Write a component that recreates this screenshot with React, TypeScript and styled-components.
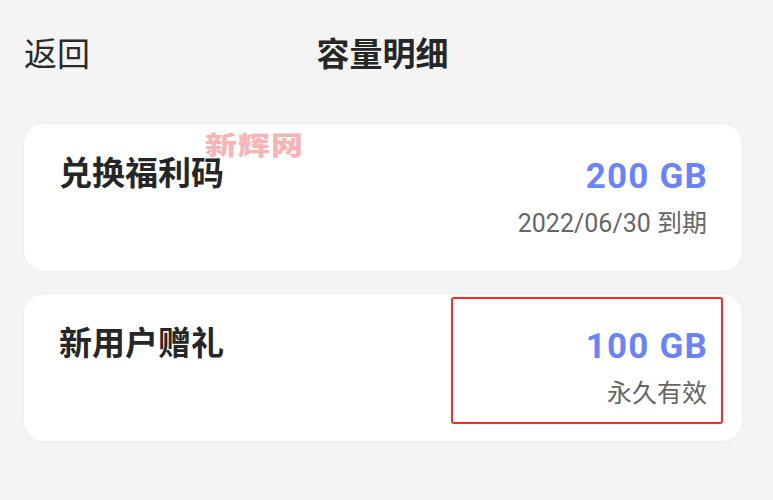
import React from "react";
import styled, { createGlobalStyle } from "styled-components";

const Global = createGlobalStyle`
  html, body { margin: 0; padding: 0; background: #f4f4f4; }
  body { font-family: Roboto, "Noto Sans CJK SC", sans-serif; color: #262626; }
`;

const Page = styled.div`
  width: 773px;
  height: 500px;
  background: #f4f4f4;
  display: flex;
  flex-direction: column;
  overflow: hidden;
`;

const Header = styled.div`
  position: relative;
  height: 104px;
  display: flex;
  align-items: center;
  padding-left: 24px;
  box-sizing: border-box;
`;

const Back = styled.div`
  font-size: 33px;
  line-height: 1;
  color: #2a2a2a;
  font-family: "Noto Sans CJK SC", sans-serif;
`;

const Title = styled.div`
  flex: 1;
  text-align: center;
  margin-right: 90px;
  margin-left: -8px;
  font-size: 33px;
  line-height: 1;
  font-weight: 700;
  color: #262626;
  font-family: "Noto Sans CJK SC", sans-serif;
`;

const List = styled.div`
  display: flex;
  flex-direction: column;
  gap: 23px;
  padding: 20px 31px 0 24px;
`;

const Card = styled.div`
  position: relative;
  height: 147px;
  box-sizing: border-box;
  background: #fff;
  border-radius: 20px;
  box-shadow: 0 0 0 1px #eeeeee;
  display: flex;
  justify-content: space-between;
  align-items: flex-start;
  padding: 27px 35px 0 35px;
`;

const Name = styled.div`
  font-family: "Noto Sans CJK SC", sans-serif;
  font-size: 33px;
  line-height: 40px;
  font-weight: 700;
  color: #262626;
`;

const Right = styled.div`
  display: flex;
  flex-direction: column;
  align-items: flex-end;
  gap: 15px;
  padding-top: 8px;
`;

const Amount = styled.div`
  font-family: Roboto, sans-serif;
  font-size: 35px;
  line-height: 35px;
  font-weight: 700;
  letter-spacing: 1.2px;
  margin-right: -1px;
  color: #6a84f6;
`;

const Sub = styled.div`
  font-family: Roboto, "Noto Sans CJK SC", sans-serif;
  font-size: 25px;
  line-height: 30px;
  color: #666666;
`;

const Watermark = styled.div`
  position: absolute;
  left: 181px;
  top: 7px;
  font-family: "Noto Sans CJK SC", sans-serif;
  font-weight: 900;
  font-size: 32px;
  letter-spacing: 1px;
  line-height: 32px;
  color: #f8b4b4;
  transform: scale(1, 0.8);
  transform-origin: top left;
  pointer-events: none;
`;

const Highlight = styled.div`
  position: absolute;
  left: 427px;
  top: 3px;
  width: 272px;
  height: 127px;
  box-sizing: border-box;
  border: 2.5px solid #ff2a22;
  border-radius: 3px;
  pointer-events: none;
`;

const items = [
  { name: "兑换福利码", amount: "200 GB", sub: "2022/06/30 到期", mark: true, box: false },
  { name: "新用户赠礼", amount: "100 GB", sub: "永久有效", mark: false, box: true },
];

export default function App() {
  return (
    <Page>
      <Global />
      <Header>
        <Back>返回</Back>
        <Title>容量明细</Title>
      </Header>
      <List>
        {items.map((it) => (
          <Card key={it.name}>
            <Name>{it.name}</Name>
            <Right>
              <Amount>{it.amount}</Amount>
              <Sub>{it.sub}</Sub>
            </Right>
            {it.mark && <Watermark>新辉网</Watermark>}
            {it.box && <Highlight />}
          </Card>
        ))}
      </List>
    </Page>
  );
}
